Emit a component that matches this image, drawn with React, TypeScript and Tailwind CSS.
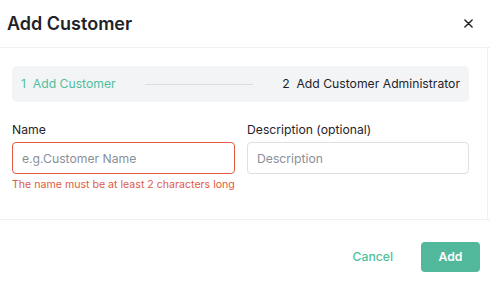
// Add Customer dialog — step 1 of the customer wizard

export default function App() {
  return (
    <div className="h-[281px] w-[490px] overflow-hidden bg-white font-['Inter',sans-serif] text-[#1f2329]">
      <div className="flex h-[48px] items-center justify-between border-b border-[#f0f0f0] pl-[7px] pr-[12px]">
        <h1 className="text-[18px] font-semibold leading-none">Add Customer</h1>
        <button className="flex h-5 w-5 items-center justify-center text-[#222]">
          <svg width="9" height="9" viewBox="0 0 10 10" fill="none" stroke="currentColor" strokeWidth="1.6" strokeLinecap="round">
            <path d="M1 1l8 8M9 1l-8 8" />
          </svg>
        </button>
      </div>

      <div className="h-[171px] w-[488px] border-r border-[#f0f0f0] px-[12px] pt-[18px]">
        <div className="flex h-[36px] w-[457px] items-center rounded-[5px] bg-[#f3f4f6] pl-[9px] pr-[9px] text-[12.2px]">
          <span className="text-[#4fbf9b]">1&nbsp; Add Customer</span>
          <span className="mx-[29px] mt-[1px] h-px flex-1 bg-[#dadcdf]" />
          <span className="text-[#1f2329]">2&nbsp; Add Customer Administrator</span>
        </div>

        <div className="mt-[19px] grid grid-cols-[223px_222px] gap-x-[12px]">
          <div>
            <label className="block text-[12.2px] leading-[17px]">Name</label>
            <input
              className="mt-[4px] h-[32px] w-full rounded-[4px] border border-[#e05a44] px-[9px] text-[12.2px] outline-none placeholder:text-[#8a8f98]"
              placeholder="e.g.Customer Name"
            />
            <p className="mt-[3px] whitespace-nowrap text-[10.6px] leading-[15px] text-[#e05a44]">
              The name must be at least 2 characters long
            </p>
          </div>
          <div>
            <label className="block text-[12.2px] leading-[17px]">Description (optional)</label>
            <input
              className="mt-[4px] h-[32px] w-full rounded-[4px] border border-[#dcdfe4] px-[9px] text-[12.2px] outline-none placeholder:text-[#8a8f98]"
              placeholder="Description"
            />
          </div>
        </div>
      </div>

      <div className="flex items-center justify-end gap-[28px] border-t border-[#f0f0f0] pr-[10px] pt-[22px]">
        <button className="text-[12.2px] font-medium text-[#4fbf9b]">Cancel</button>
        <button className="h-[30px] w-[59px] rounded-[4px] bg-[#52b89b] text-[12.2px] font-semibold text-white">
          Add
        </button>
      </div>
    </div>
  );
}
